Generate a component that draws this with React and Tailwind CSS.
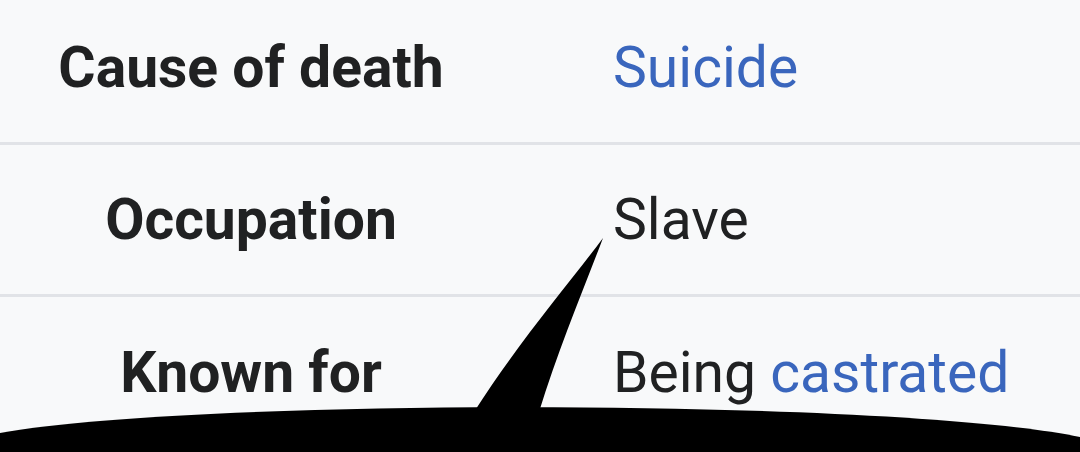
import React from 'react';

const ROWS = [
  { label: 'Cause of death', value: [{ text: 'Suicide', link: true }] },
  { label: 'Occupation', value: [{ text: 'Slave' }] },
  { label: 'Known for', value: [{ text: 'Being ' }, { text: 'castrated', link: true }] },
];

function Bubble() {
  return (
    <svg className="absolute inset-0 pointer-events-none" width="1080" height="452" viewBox="0 0 1080 452">
      <path d="M0,433 C190,398 890,398 1080,437 L1080,452 L0,452 Z" fill="#000" />
      <path d="M474,412 C520,340 568,285 603,238 C584,288 558,350 539,412 Z" fill="#000" />
    </svg>
  );
}

export default function App() {
  return (
    <div className="relative w-[1080px] h-[452px] overflow-hidden bg-[#f8f9fa]" style={{ fontFamily: 'Roboto, "Noto Sans", sans-serif' }}>
      <div className="-mt-[7px]">
        {ROWS.map((row, i) => (
          <div key={row.label} className={`flex items-center h-[152px] ${i < ROWS.length - 1 ? 'border-b-[3px] border-[#e1e3e7]' : ''}`}>
            <div className="w-[502px] text-center font-bold text-[57px] text-[#202122]">{row.label}</div>
            <div className="pl-[111px] text-[57px] text-[#202122]">
              {row.value.map((v, j) => (
                <span key={j} className={v.link ? 'text-[#3a66bd]' : ''}>{v.text}</span>
              ))}
            </div>
          </div>
        ))}
      </div>
      <Bubble />
    </div>
  );
}
